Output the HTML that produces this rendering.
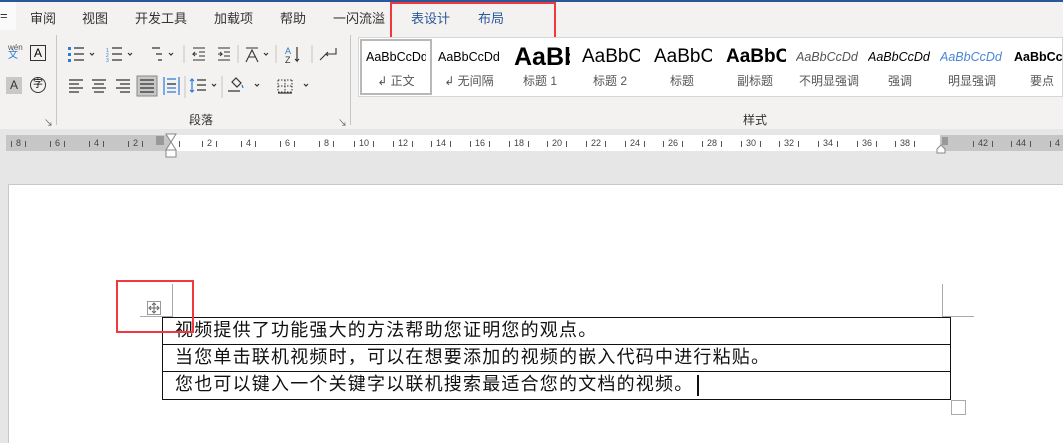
<!DOCTYPE html>
<html><head><meta charset="utf-8"><style>
*{margin:0;padding:0;box-sizing:border-box}
body{width:1063px;height:443px;overflow:hidden;background:#e6e6e6;font-family:"Liberation Sans","Noto Sans CJK SC",sans-serif;position:relative}
.a{position:absolute}
.tab{position:absolute;top:8px;font-size:13px;color:#333;white-space:nowrap}
.st{position:absolute;top:40px;height:55px;text-align:center;white-space:nowrap;overflow:hidden}
.st .s{font-size:13px;height:26px;line-height:26px;margin-top:4px;color:#000}
.st .l{font-size:12px;color:#555;margin-top:2px}
.rn{position:absolute;top:138px;font-size:9px;color:#444;white-space:nowrap}
.rn i{font-style:normal;display:inline-block;width:1px;height:6px;background:#555;margin:0 4px;vertical-align:-1px}
.row{position:absolute;left:162px;width:789px;height:28px;border:1.5px solid #111;font-size:18px;line-height:25px;padding-left:12px;color:#111;letter-spacing:1.2px;white-space:nowrap}
svg{position:absolute}
</style></head><body>
<div class="a" style="left:0;top:0;width:1063px;height:2px;background:#2b579a"></div>
<div class="a" style="left:0;top:2px;width:1063px;height:127px;background:#f3f2f1"></div>
<div class="a" style="left:0;top:2px;width:16px;height:28px;background:#fafafa"></div>
<div class="tab" style="left:0">=</div>
<div class="tab" style="left:30px">审阅</div>
<div class="tab" style="left:82px">视图</div>
<div class="tab" style="left:135px">开发工具</div>
<div class="tab" style="left:214px">加载项</div>
<div class="tab" style="left:280px">帮助</div>
<div class="tab" style="left:333px">一闪流溢</div>
<div class="tab" style="left:411px;color:#2b579a">表设计</div>
<div class="tab" style="left:478px;color:#2b579a">布局</div>
<div class="a" style="left:390px;top:2px;width:166px;height:42px;border:2px solid #f0393e"></div>

<div class="a" style="left:8px;top:44px;font-size:8px;color:#555;line-height:8px">wén<br><span style="color:#2b7cd3;font-size:10px">文</span></div>
<div class="a" style="left:30px;top:45px;width:16px;height:16px;border:1px solid #333;font-size:12px;text-align:center;line-height:14px">A</div>
<div class="a" style="left:6px;top:77px;width:16px;height:17px;background:#c8c8c8;font-size:12px;text-align:center;line-height:17px;color:#333">A</div>
<div class="a" style="left:30px;top:77px;width:16px;height:16px;border:1px solid #333;border-radius:50%;font-size:10px;text-align:center;line-height:14px">字</div>
<div class="a" style="left:44px;top:116px;font-size:9px;color:#555">↘</div>
<div class="a" style="left:56px;top:35px;width:1px;height:90px;background:#c8c6c4"></div>

<svg style="left:66px;top:44px" width="280" height="20" fill="none" stroke="#333" stroke-width="1.2">
<rect x="2" y="3" width="3" height="3" fill="#2b7cd3" stroke="none"/><rect x="2" y="9" width="3" height="3" fill="#2b7cd3" stroke="none"/><rect x="2" y="15" width="3" height="3" fill="#2b7cd3" stroke="none"/>
<path d="M8 4h10M8 10h10M8 16h10M24 9l2 2 2-2"/>
<path d="M46 4h10M46 10h10M46 16h10M62 9l2 2 2-2"/><text x="40" y="8" font-size="5" fill="#2b7cd3" stroke="none">1</text><text x="40" y="13" font-size="5" fill="#2b7cd3" stroke="none">2</text><text x="40" y="18" font-size="5" fill="#2b7cd3" stroke="none">3</text>
<path d="M86 4h8M90 10h6M92 16h4M103 9l2 2 2-2"/>
<path d="M118 1v18" stroke="#ccc"/>
<path d="M127 4h12M133 8h6M133 12h6M127 16h12M131 10h-4l2-2M127 10l2 2" stroke-width="1"/>
<path d="M152 4h12M158 8h6M158 12h6M152 16h12M152 10h4l-2-2M156 10l-2 2" stroke-width="1"/>
<path d="M172 1v18" stroke="#ccc"/>
<path d="M180 18l6-12 6 12M182 13h8M186 4h-6M186 4h6" stroke-width="1.1"/><path d="M198 9l2 2 2-2"/>
<path d="M210 1v18" stroke="#ccc"/>
<text x="219" y="10" font-size="9" fill="#2b7cd3" stroke="none">A</text><text x="219" y="19" font-size="9" fill="#333" stroke="none">Z</text><path d="M231 3v14l-2-2M231 17l2-2"/>
<path d="M246 1v18" stroke="#ccc"/>
<path d="M270 4v6h-10l2-2M260 10l2 2M254 16l6-6" stroke-width="1.1"/>
</svg>
<svg style="left:66px;top:75px" width="280" height="24" fill="none" stroke="#333" stroke-width="1.2">
<path d="M3 5h14M3 9h10M3 13h14M3 17h10"/>
<path d="M26 5h14M28 9h10M26 13h14M28 17h10"/>
<path d="M50 5h14M54 9h10M50 13h14M54 17h10"/>
<rect x="71" y="1" width="20" height="20" fill="#c8c8c8" stroke="#888" stroke-width="1"/>
<path d="M74 5h14M74 9h14M74 13h14M74 17h14"/>
<path d="M98 2v18M113 2v18M101 4h9M101 9h9M101 13h9M101 17h9" stroke="#2b7cd3"/><path d="M101 9h9" stroke="#333"/>
<path d="M119 1v22" stroke="#ccc"/>
<path d="M126 4v13M124 6l2-2 2 2M124 15l2 2 2-2" stroke="#2b7cd3"/><path d="M131 5h9M131 10h9M131 15h9M146 9l2 2 2-2"/>
<path d="M156 1v22" stroke="#ccc"/>
<path d="M166 7l4-4 5 5-4 4zM162 16h12" /><path d="M176 10l1 3" stroke="#2b7cd3"/><path d="M189 9l2 2 2-2"/>
<path d="M212 5h14M212 17h14M212 5v12M226 5v12M219 5v12M212 11h14" stroke-dasharray="1.5 1.5" stroke-width="1"/><path d="M212 18h14"/><path d="M238 9l2 2 2-2"/>
</svg>
<div class="a" style="left:189px;top:111px;font-size:12px;color:#333">段落</div>
<div class="a" style="left:338px;top:116px;font-size:9px;color:#555">↘</div>
<div class="a" style="left:350px;top:35px;width:1px;height:90px;background:#c8c6c4"></div>

<div class="a" style="left:358px;top:37px;width:705px;height:60px;background:#fff;border:1px solid #d6d6d6"></div>
<div class="a" style="left:360px;top:39px;width:72px;height:56px;border:2px solid #b8b8b8;background:#fff"></div>
<div class="st" style="left:366px;width:60px"><div class="s" style="font-size:12.5px;text-align:left">AaBbCcDd</div><div class="l">↲ 正文</div></div>
<div class="st" style="left:438px;width:62px"><div class="s" style="font-size:12.5px;text-align:left">AaBbCcDd</div><div class="l">↲ 无间隔</div></div>
<div class="st" style="left:510px;width:60px"><div class="s" style="font-size:25px;font-weight:bold;text-align:left;padding-left:4px">AaBb</div><div class="l">标题 1</div></div>
<div class="st" style="left:580px;width:60px"><div class="s" style="font-size:19px;text-align:left;padding-left:2px">AaBbC</div><div class="l">标题 2</div></div>
<div class="st" style="left:652px;width:60px"><div class="s" style="font-size:19px;text-align:left;padding-left:2px">AaBbC</div><div class="l">标题</div></div>
<div class="st" style="left:724px;width:62px"><div class="s" style="font-size:19px;font-weight:bold;text-align:left;padding-left:2px">AaBbC</div><div class="l">副标题</div></div>
<div class="st" style="left:796px;width:66px"><div class="s" style="font-size:12.5px;font-style:italic;color:#555;text-align:left">AaBbCcDd</div><div class="l">不明显强调</div></div>
<div class="st" style="left:868px;width:64px"><div class="s" style="font-size:12.5px;font-style:italic;text-align:left">AaBbCcDd</div><div class="l">强调</div></div>
<div class="st" style="left:940px;width:64px"><div class="s" style="font-size:12.5px;font-style:italic;color:#4a86d6;text-align:left">AaBbCcDd</div><div class="l">明显强调</div></div>
<div class="st" style="left:1012px;width:51px;text-align:left"><div class="s" style="font-size:12.5px;font-weight:bold;text-align:left;padding-left:2px">AaBbCc</div><div class="l" style="text-align:left;padding-left:18px">要点</div></div>
<div class="a" style="left:743px;top:111px;font-size:12px;color:#333">样式</div>

<div class="a" style="left:6px;top:135px;width:1057px;height:16px;background:#c6c6c6"></div>
<div class="a" style="left:171px;top:135px;width:769px;height:16px;background:#fff"></div>
<div class="rn" style="left:7px"><i></i>8<i></i></div><div class="rn" style="left:46px"><i></i>6<i></i></div><div class="rn" style="left:85px"><i></i>4<i></i></div><div class="rn" style="left:124px"><i></i>2<i></i></div>
<div class="rn" style="left:175px"><i></i></div>
<div class="rn" style="left:198px"><i></i>2<i></i></div><div class="rn" style="left:237px"><i></i>4<i></i></div><div class="rn" style="left:276px"><i></i>6<i></i></div><div class="rn" style="left:315px"><i></i>8<i></i></div>
<div class="rn" style="left:350px"><i></i>10<i></i></div><div class="rn" style="left:389px"><i></i>12<i></i></div><div class="rn" style="left:427px"><i></i>14<i></i></div><div class="rn" style="left:466px"><i></i>16<i></i></div><div class="rn" style="left:505px"><i></i>18<i></i></div><div class="rn" style="left:543px"><i></i>20<i></i></div><div class="rn" style="left:582px"><i></i>22<i></i></div><div class="rn" style="left:621px"><i></i>24<i></i></div><div class="rn" style="left:659px"><i></i>26<i></i></div><div class="rn" style="left:698px"><i></i>28<i></i></div><div class="rn" style="left:737px"><i></i>30<i></i></div><div class="rn" style="left:775px"><i></i>32<i></i></div><div class="rn" style="left:814px"><i></i>34<i></i></div><div class="rn" style="left:853px"><i></i>36<i></i></div><div class="rn" style="left:891px"><i></i>38<i></i></div>
<div class="rn" style="left:969px"><i></i>42<i></i></div><div class="rn" style="left:1007px"><i></i>44<i></i></div><div class="rn" style="left:1046px"><i></i>4</div>
<svg style="left:155px;top:133px" width="24" height="26" fill="#fff" stroke="#888" stroke-width="1"><rect x="1" y="3" width="8" height="9" fill="#999" stroke="none"/><path d="M11 1h10l-5 8zM11 17l5-8 5 8zM11 17h10v7h-10z"/></svg>
<svg style="left:936px;top:135px" width="14" height="20" fill="#fff" stroke="#888"><rect x="6" y="2" width="6" height="8" fill="#999" stroke="none"/><path d="M1 18v-4l4-4 4 4v4z"/></svg>

<div class="a" style="left:8px;top:184px;width:1055px;height:259px;background:#fff;border-top:1px solid #c8c8c8;border-left:1px solid #c8c8c8"></div>
<div class="a" style="left:172px;top:284px;width:1px;height:32px;background:#aaa"></div>
<div class="a" style="left:140px;top:316px;width:33px;height:1px;background:#aaa"></div>
<div class="a" style="left:942px;top:284px;width:1px;height:32px;background:#aaa"></div>
<div class="a" style="left:942px;top:316px;width:32px;height:1px;background:#aaa"></div>
<svg style="left:147px;top:301px" width="14" height="14" fill="none" stroke="#666" stroke-width="1"><rect x="0.5" y="0.5" width="13" height="13" stroke="#999"/><path d="M7 2v10M2 7h10M5 4l2-2 2 2M5 10l2 2 2-2M4 5l-2 2 2 2M10 5l2 2-2 2"/></svg>
<div class="row" style="top:317px">视频提供了功能强大的方法帮助您证明您的观点。</div>
<div class="row" style="top:344px">当您单击联机视频时，可以在想要添加的视频的嵌入代码中进行粘贴。</div>
<div class="row" style="top:371px;height:29px">您也可以键入一个关键字以联机搜索最适合您的文档的视频。</div>
<div class="a" style="left:697px;top:375px;width:1.5px;height:21px;background:#111"></div>
<div class="a" style="left:951px;top:400px;width:15px;height:15px;border:1px solid #aaa"></div>
<div class="a" style="left:116px;top:280px;width:78px;height:53px;border:2px solid #f0393e"></div>
</body></html>
